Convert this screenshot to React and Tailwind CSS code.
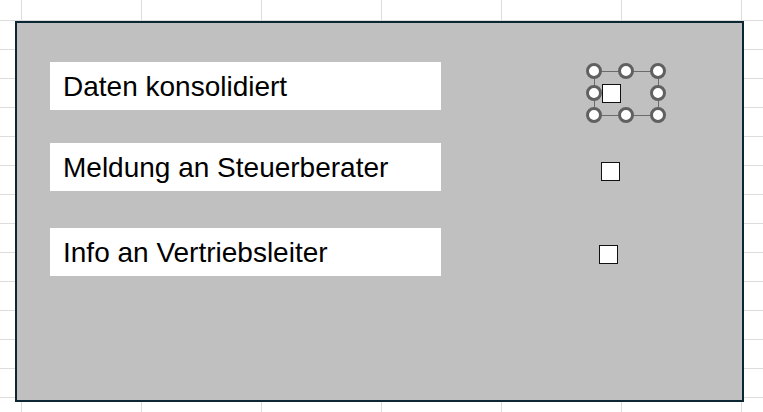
const rows = [
  { label: 'Daten konsolidiert', cb: 'ml-[161px] mt-[22px]', gap: 'mt-[39px]', selected: true },
  { label: 'Meldung an Steuerberater', cb: 'ml-[160px] mt-[19px]', gap: 'mt-[33px]' },
  { label: 'Info an Vertriebsleiter', cb: 'ml-[158px] mt-[17px]', gap: 'mt-[37px]' },
];

// selection handles around the active checkbox, centers relative to checkbox top-left
const handles = [
  'left-[-8px] top-[-13px]', 'left-[24px] top-[-13px]', 'left-[56px] top-[-13px]',
  'left-[-8px] top-[9px]', 'left-[56px] top-[9px]',
  'left-[-8px] top-[31px]', 'left-[24px] top-[31px]', 'left-[56px] top-[31px]',
];

function Checkbox({ selected }) {
  return (
    <div className="relative w-[19px] h-[19px]">
      {selected && (
        <div className="absolute left-[-8px] top-[-13px] w-[65px] h-[45px] border border-[#6b6b6b]" />
      )}
      <div className="relative w-[19px] h-[19px] bg-white border-[1.5px] border-[#111]" />
      {selected && handles.map((h) => (
        <div
          key={h}
          className={`absolute ${h} w-[16px] h-[16px] -translate-x-1/2 -translate-y-1/2 rounded-full bg-white border-[3.5px] border-[#606060]`}
        />
      ))}
    </div>
  );
}

export default function App() {
  return (
    <div
      className="w-full min-h-[412px] h-[412px] overflow-hidden bg-white bg-[linear-gradient(to_right,#dcdcdc_1px,transparent_1px),linear-gradient(to_bottom,#dcdcdc_1px,transparent_1px)] bg-[size:120px_29px] bg-[position:21px_20px] pt-[21px] pl-[15px]"
      style={{ fontFamily: '"Liberation Sans", Arial, sans-serif' }}
    >
      <div className="w-[729px] h-[381px] border-2 border-[#0c2633] bg-[#c0c0c0] pl-[33px]">
        {rows.map((r) => (
          <div key={r.label} className={`flex items-start ${r.gap}`}>
            <div className="w-[391px] h-[48px] bg-white flex items-center pl-[13px] pt-[1px] text-[28px] leading-none text-black">
              {r.label}
            </div>
            <div className={r.cb}>
              <Checkbox selected={r.selected} />
            </div>
          </div>
        ))}
      </div>
    </div>
  );
}
